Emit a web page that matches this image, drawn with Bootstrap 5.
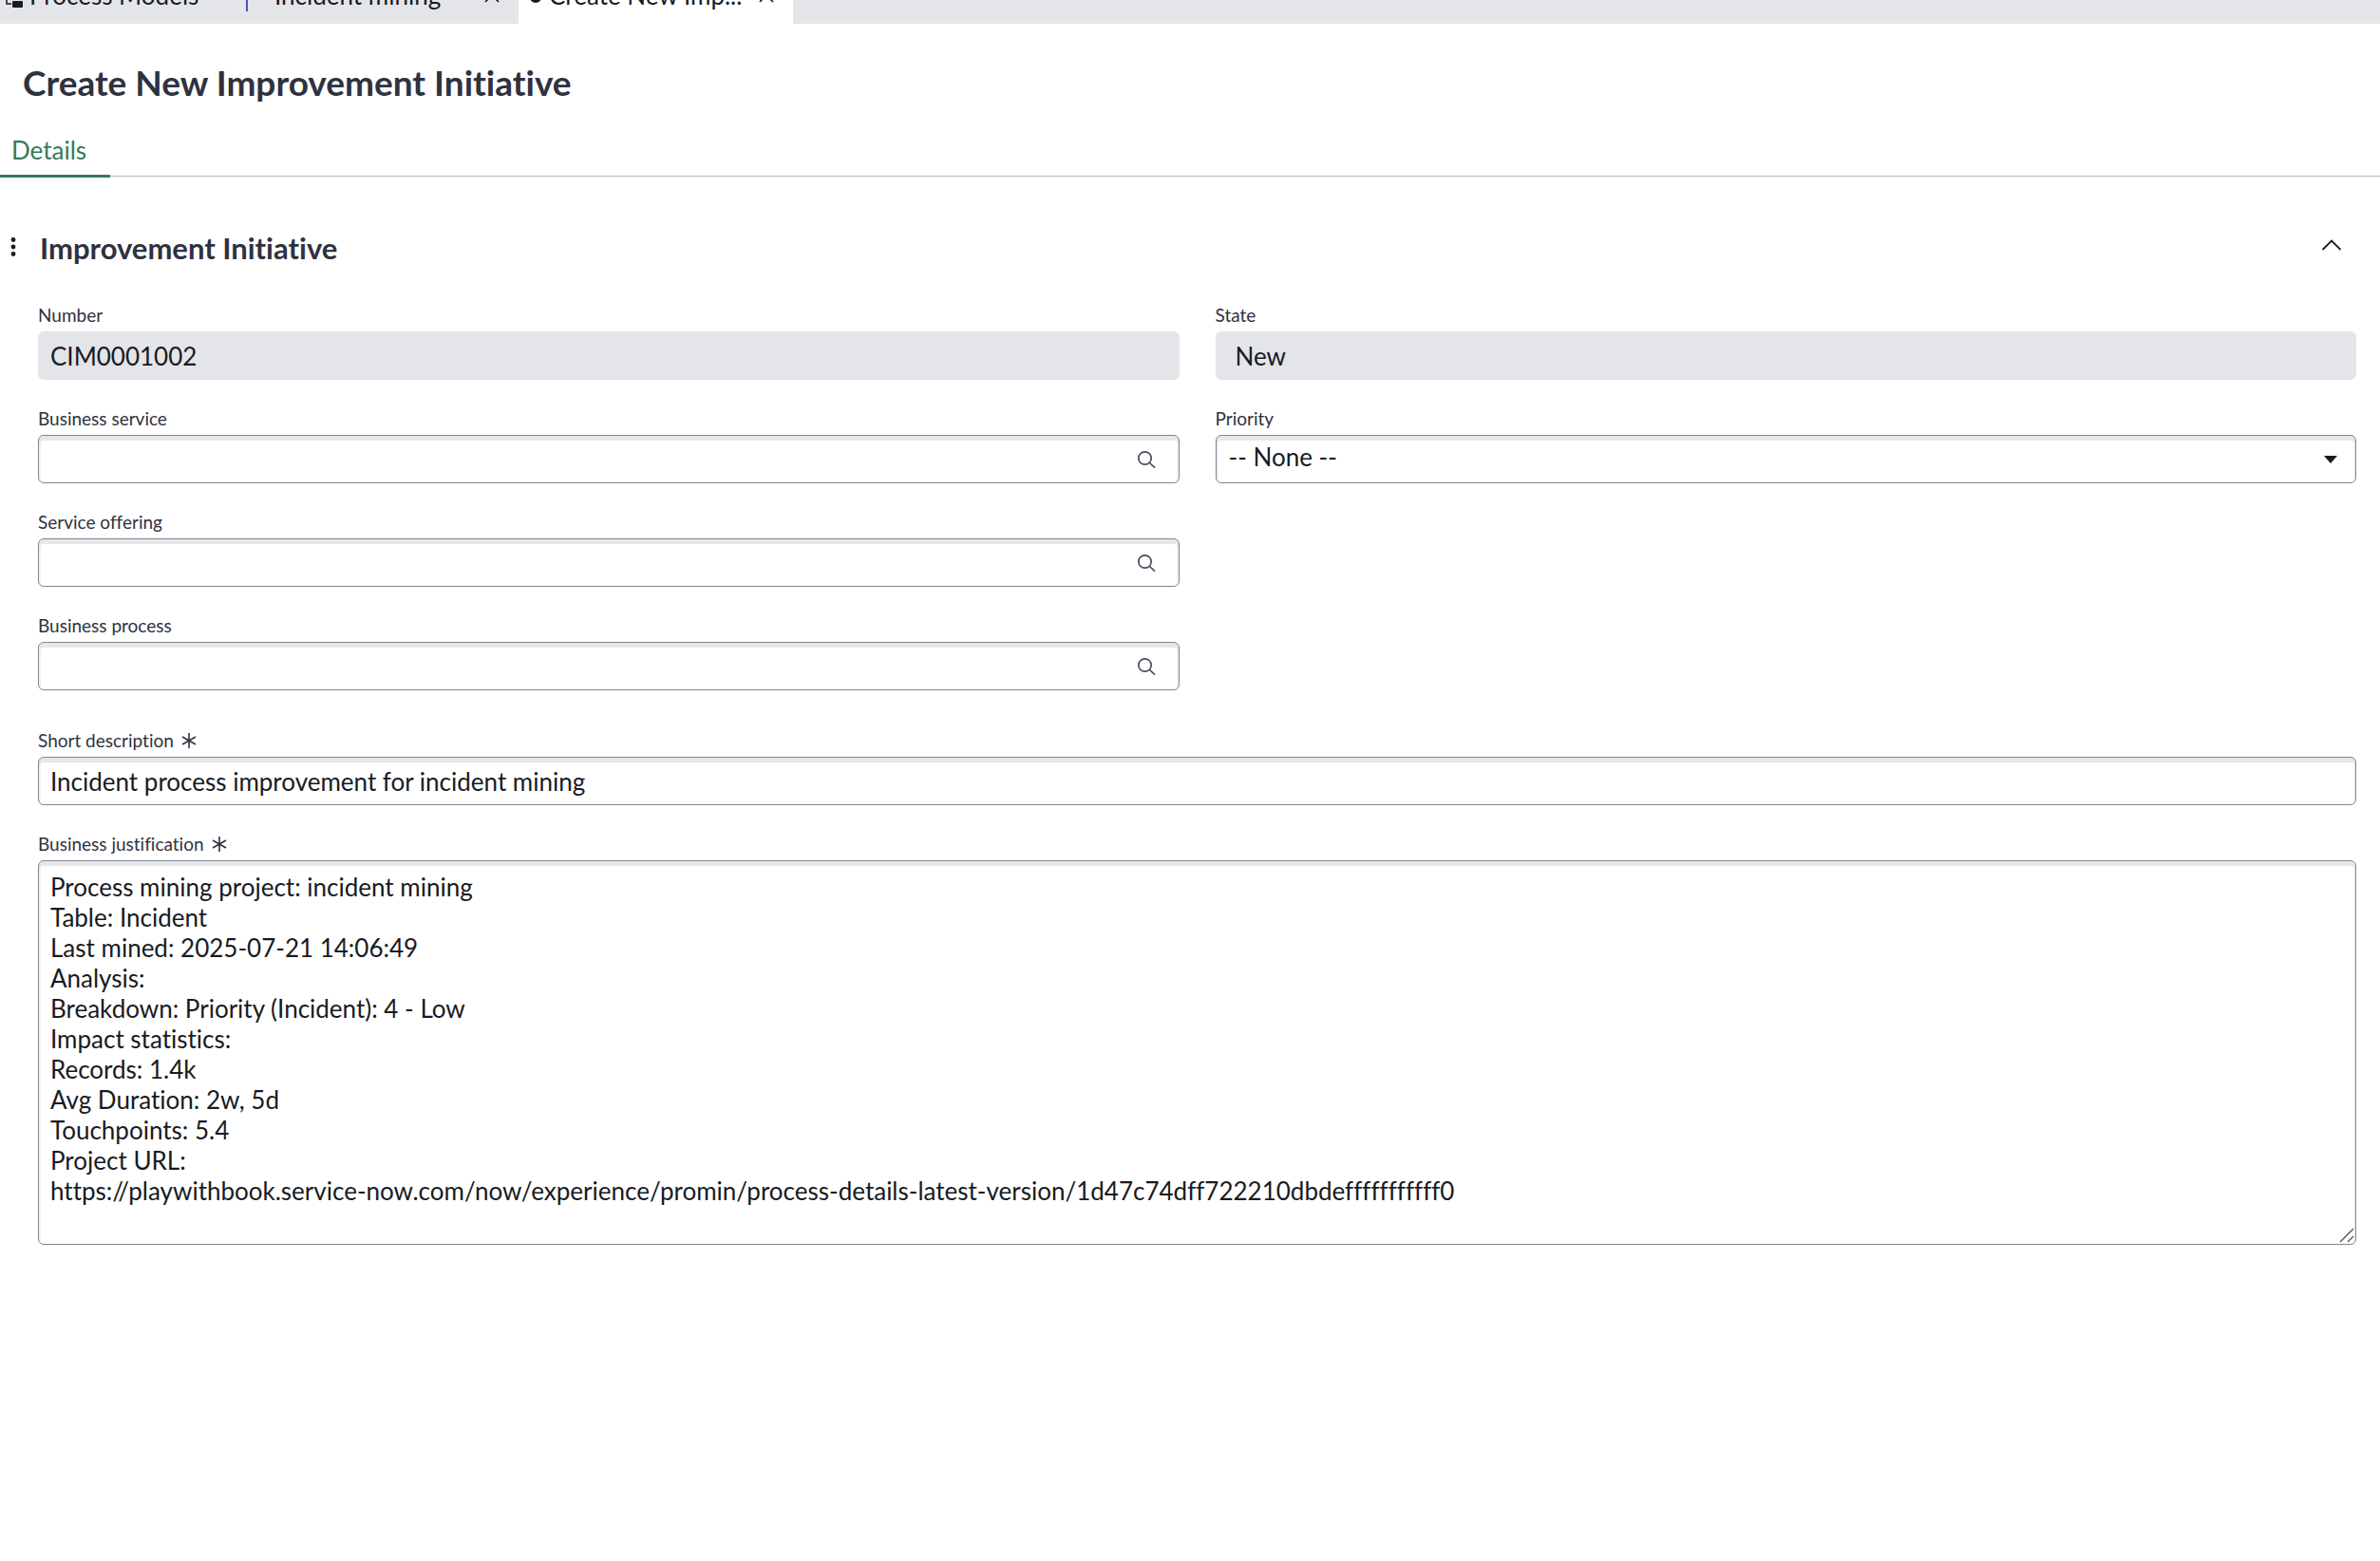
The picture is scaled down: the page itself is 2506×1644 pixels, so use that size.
<!DOCTYPE html>
<html lang="en">
<head>
<meta charset="utf-8">
<meta name="viewport" content="width=device-width, initial-scale=1">
<title>Create New Improvement Initiative</title>
<link rel="stylesheet" href="https://cdn.jsdelivr.net/npm/bootstrap@5.3.0/dist/css/bootstrap.min.css">
<style>
  :root { --ink: #181b22; --heading: #2e3240; --edge: #7f8593; --fill: #e4e5e9; --accent: #347c5b; }
  body { font-family: Lato, "Open Sans", sans-serif; font-size: 26px; line-height: 32px; color: var(--ink); background: #fff; }
  body, input, select, textarea { font-variant-ligatures: none; }

  .tab-strip { height: 25px; background: var(--fill); }
  .ws-tab { height: 60px; color: var(--ink); white-space: nowrap; }
  .ws-models { width: 261px; padding-left: 5px; gap: 6px; }
  .ws-mining { width: 285px; padding-left: 28px; padding-right: 20px; }
  .ws-create { width: 289px; padding-left: 12px; padding-right: 20px; background: #fff; gap: 8px; }
  .ws-rule { width: 2px; height: 34px; background: #5450b8; }
  .ws-dot { width: 12px; height: 12px; margin-top: 4px; border-radius: 50%; background: var(--ink); }
  .bare-btn { border: 0; background: none; padding: 0; color: var(--ink); display: flex; }

  .page-title { font-size: 37px; line-height: 44px; font-weight: 700; color: var(--heading); padding: 40px 24px 33px; margin: 0; }
  .detail-tabs { border-bottom: 1px solid #b1b5be; margin-bottom: 55px; }
  .detail-tabs .detail-link { color: var(--accent); padding: 0 25px 10px 12px; border-bottom: 3px solid var(--accent); margin-bottom: -2px; }

  .section-head { padding: 0 40px 0 10px; margin-bottom: 38px; }
  .section-head h2 { font-size: 31px; line-height: 40px; font-weight: 700; color: var(--heading); margin: 0; }
  .form-area { padding: 0 25px 0 40px; }
  .form-area .row { --bs-gutter-x: 38px; }
  .field { margin-bottom: 28px; }
  .field label { display: flex; align-items: center; gap: 8px; font-size: 19px; line-height: 26px; color: var(--heading); margin-bottom: 4px; }
  .box { display: block; width: 100%; height: 51px; border: 1px solid var(--edge); border-radius: 6px; background-color: #fff; color: var(--ink); padding: 0 12px; font-size: 26px; line-height: 32px; outline: 0;
    box-shadow: inset 0 5px 0 #e6e7e9, inset 0 2px 0 2px #f0f1f3; }
  .box.locked { background: var(--fill); border-color: var(--fill); box-shadow: none; opacity: 1; }
  select.box { appearance: none; padding-left: 13px; }
  select.locked { padding-left: 20px; }
  select.pick { padding-bottom: 5px; }
  .caret { right: 20px; top: 22px; pointer-events: none; }
  .lookup { display: flex; align-items: center; padding-right: 24px; }
  .lookup input { flex: 1; min-width: 0; border: 0; background: none; outline: 0; }
  textarea.box { height: auto; padding: 11px 12px 8px; resize: none; overflow: hidden; }
  .grip { right: 2px; bottom: 2px; pointer-events: none; }
  svg { display: block; flex: none; }
</style>
</head>
<body>
<svg width="0" height="0" class="position-absolute" aria-hidden="true">
  <symbol id="lens" viewBox="0 0 20 20"><g fill="none" stroke="#474c5a" stroke-width="1.7"><circle cx="8.5" cy="8.5" r="6.7"/><path d="M13 13l6 5.700"/></g></symbol>
  <symbol id="star" viewBox="0 0 16 16"><path d="M8 0v16M1 4l14 8M15 4L1 12" fill="none" stroke="#2e3240" stroke-width="1.6"/></symbol>
  <symbol id="cross" viewBox="0 0 16 16"><path d="M1 1l14 14M15 1L1 15" fill="none" stroke="#181b22" stroke-width="1.6"/></symbol>
</svg>

<nav class="tab-strip d-flex align-items-end overflow-hidden" aria-label="Workspace tabs">
  <div class="ws-tab ws-models d-flex align-items-center">
    <svg width="20" height="26" viewBox="0 0 20 26"><path d="M2 8v14h5" fill="none" stroke="#181b22" stroke-width="1.500"/><rect x="8" y="19" width="11" height="7" rx="1" fill="#181b22"/><rect x="8" y="16" width="11" height="2" fill="#181b22"/><rect x="0" y="2" width="10" height="8" rx="1" fill="#181b22"/></svg>
    <span>Process Models</span>
    <span class="ws-rule ms-auto"></span>
  </div>
  <div class="ws-tab ws-mining d-flex align-items-center justify-content-between">
    <span>Incident mining</span>
    <button class="bare-btn" type="button" aria-label="Close Incident mining"><svg width="16" height="16"><use href="#cross"/></svg></button>
  </div>
  <div class="ws-tab ws-create d-flex align-items-center">
    <span class="ws-dot"></span>
    <span>Create New Imp...</span>
    <button class="bare-btn ms-auto" type="button" aria-label="Close Create New Improvement"><svg width="16" height="16"><use href="#cross"/></svg></button>
  </div>
</nav>

<main>
  <h1 class="page-title">Create New Improvement Initiative</h1>
  <div class="detail-tabs d-flex"><a class="detail-link text-decoration-none" href="#details">Details</a></div>

  <section id="details">
    <div class="section-head d-flex align-items-center">
      <button class="bare-btn" type="button" aria-label="Section options"><svg width="8" height="22" viewBox="0 0 8 22" fill="#181b22"><circle cx="4" cy="2.500" r="2.400"/><circle cx="4" cy="10" r="2.400"/><circle cx="4" cy="17.500" r="2.400"/></svg></button>
      <h2 class="ms-4">Improvement Initiative</h2>
      <button class="bare-btn ms-auto" type="button" aria-label="Collapse section"><svg width="22" height="18" viewBox="0 0 22 18"><path d="M1.500 11L11 1.500l9.500 9.500" fill="none" stroke="#181b22" stroke-width="1.800"/></svg></button>
    </div>

    <form class="form-area">
      <div class="row">
        <div class="col-6">
          <div class="field"><label for="number">Number</label><input id="number" class="box locked" value="CIM0001002" readonly></div>
          <div class="field"><label for="service">Business service</label>
            <div class="box lookup"><input id="service" type="text"><button class="bare-btn" type="button" aria-label="Look up business service"><svg width="20" height="20"><use href="#lens"/></svg></button></div></div>
          <div class="field"><label for="offering">Service offering</label>
            <div class="box lookup"><input id="offering" type="text"><button class="bare-btn" type="button" aria-label="Look up service offering"><svg width="20" height="20"><use href="#lens"/></svg></button></div></div>
          <div class="field"><label for="process">Business process</label>
            <div class="box lookup"><input id="process" type="text"><button class="bare-btn" type="button" aria-label="Look up business process"><svg width="20" height="20"><use href="#lens"/></svg></button></div></div>
        </div>
        <div class="col-6">
          <div class="field"><label for="state">State</label><select id="state" class="box locked" disabled><option>New</option></select></div>
          <div class="field"><label for="priority">Priority</label>
            <div class="position-relative"><select id="priority" class="box pick"><option>-- None --</option></select>
              <svg class="caret position-absolute" width="14" height="8" viewBox="0 0 14 8"><path d="M0 0h14L7 8z" fill="#181b22"/></svg></div></div>
        </div>
      </div>
      <div class="field mt-2 pt-1"><label for="short">Short description <svg width="16" height="16"><use href="#star"/></svg></label><input id="short" class="box" value="Incident process improvement for incident mining" required></div>
      <div class="field"><label for="why">Business justification <svg width="16" height="16"><use href="#star"/></svg></label>
        <div class="position-relative"><textarea id="why" class="box" rows="12" required spellcheck="false">Process mining project: incident mining
Table: Incident
Last mined: 2025-07-21 14:06:49
Analysis:
Breakdown: Priority (Incident): 4 - Low
Impact statistics:
Records: 1.4k
Avg Duration: 2w, 5d
Touchpoints: 5.4
Project URL:
https://playwithbook.service-now.com/now/experience/promin/process-details-latest-version/1d47c74dff722210dbdefffffffffff0
</textarea>
          <svg class="grip position-absolute" width="16" height="16" viewBox="0 0 16 16"><path d="M1 15L15 1M9 15l6-6" fill="none" stroke="#5f6064" stroke-width="1.500"/></svg></div></div>
    </form>
  </section>
</main>
<script src="https://cdn.jsdelivr.net/npm/bootstrap@5.3.0/dist/js/bootstrap.bundle.min.js"></script>
</body>
</html>
